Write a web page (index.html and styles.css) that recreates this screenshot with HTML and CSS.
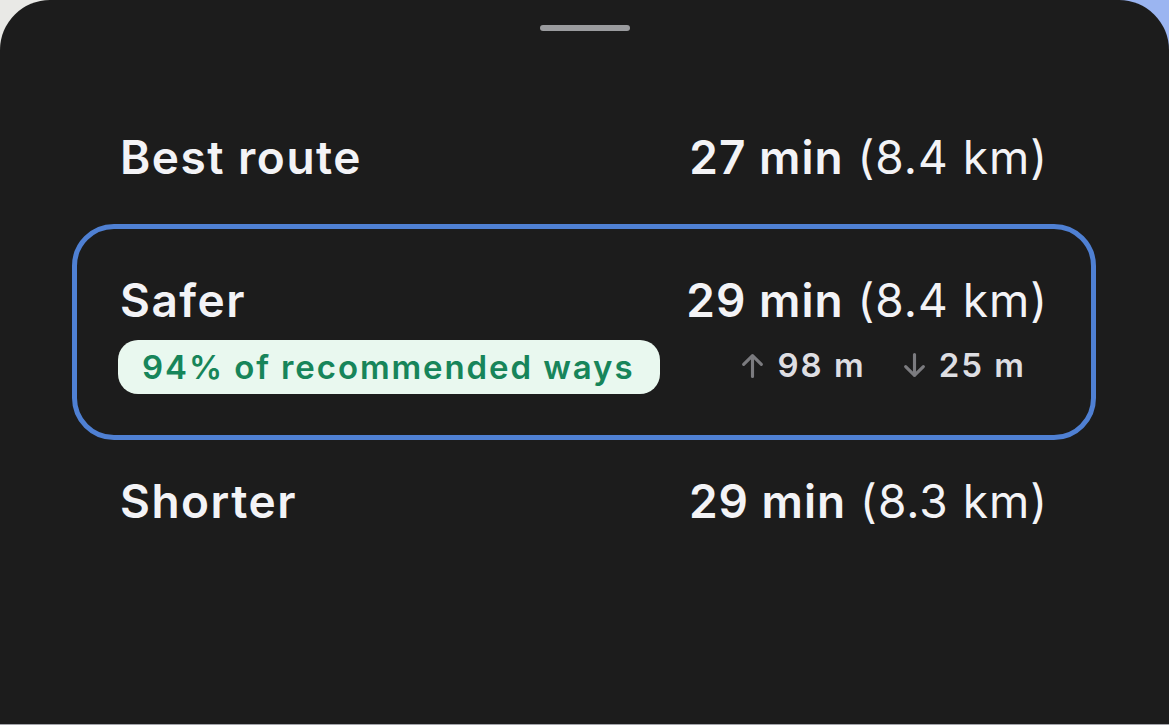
FILE: index.html
```html
<!DOCTYPE html>
<html lang="en">
<head>
  <meta charset="UTF-8" />
  <meta name="viewport" content="width=device-width, initial-scale=1.0"/>
  <title>Routes</title>
  <link rel="stylesheet" href="styles.css">
</head>
<body>
  <div class="screen">
    <div class="sheet">
      <div class="handle"></div>

      <div class="routes">
        <div class="route">
          <div class="route-line">
            <span class="route-name">Best route</span>
            <span class="route-time"><b>27 min</b> (8.4 km)</span>
          </div>
        </div>

        <div class="route selected">
          <div class="route-line">
            <span class="route-name">Safer</span>
            <span class="route-time"><b>29 min</b> (8.4 km)</span>
          </div>
          <div class="route-line">
            <span class="badge">94% of recommended ways</span>
            <div class="elevation">
              <span class="elev-item">
                <svg class="arrow" viewBox="0 0 24 24"><path d="M12 22.5V2.5M3.5 11l8.5-8.5 8.5 8.5"/></svg>
                98 m
              </span>
              <span class="elev-item">
                <svg class="arrow" viewBox="0 0 24 24"><path d="M12 1.5v20M3.5 13l8.5 8.5 8.5-8.5"/></svg>
                25 m
              </span>
            </div>
          </div>
        </div>

        <div class="route">
          <div class="route-line">
            <span class="route-name">Shorter</span>
            <span class="route-time"><b>29 min</b> (8.3 km)</span>
          </div>
        </div>
      </div>
    </div>
  </div>
</body>
</html>
```

FILE: styles.css
```css
* {
  margin: 0;
  padding: 0;
  box-sizing: border-box;
}

html, body {
  height: 100%;
  font-family: Inter, 'Noto Sans', sans-serif;
  background: #a3a4aa;
  overflow: hidden;
}

.screen {
  height: 724px;
  background: linear-gradient(to right, #e9e9e6 50%, #9bb5f1 50%);
}

/* Bottom sheet */
.sheet {
  height: 724px;
  background: #1c1c1c;
  border-radius: 50px 50px 0 0;
  padding-top: 25px;
  color: #f3f3f6;
}

.handle {
  width: 90px;
  height: 6px;
  border-radius: 3px;
  background: #9a9b9e;
  margin: 0 auto 78px;
}

.routes {
  display: flex;
  flex-direction: column;
  gap: 13px;
  margin: 0 73px 0 72px;
}

.route {
  border: 5px solid transparent;
  border-radius: 42px;
  padding: 17px 43px 17px 43px;
}

.route.selected {
  border-color: #4f80d3;
  padding-top: 45px;
  padding-bottom: 41px;
  margin-top: 6px;
  display: flex;
  flex-direction: column;
  gap: 14px;
}

.route-line {
  display: flex;
  justify-content: space-between;
  align-items: center;
}

.route-name {
  font-size: 46px;
  font-weight: 600;
  line-height: 52px;
  letter-spacing: 1.5px;
}

.route-time {
  font-size: 46px;
  font-weight: 400;
  line-height: 52px;
  letter-spacing: 1px;
}

.route-time b {
  font-weight: 600;
}

.badge {
  background: #e9f8ef;
  color: #17855a;
  font-size: 33px;
  font-weight: 600;
  line-height: 54px;
  letter-spacing: 1.9px;
  padding: 0 26px 0 24px;
  border-radius: 20px;
  margin-left: -2px;
}

.elevation {
  display: flex;
  gap: 36px;
  margin-right: 22px;
  margin-top: -4px;
  color: #dedee2;
  font-size: 33px;
  font-weight: 600;
  letter-spacing: 2px;
}

.elev-item {
  display: flex;
  align-items: center;
  gap: 12px;
}

.arrow {
  width: 25px;
  height: 25px;
  fill: none;
  stroke: #7b7b7f;
  stroke-width: 3;
  stroke-linecap: round;
  stroke-linejoin: round;
}
```
